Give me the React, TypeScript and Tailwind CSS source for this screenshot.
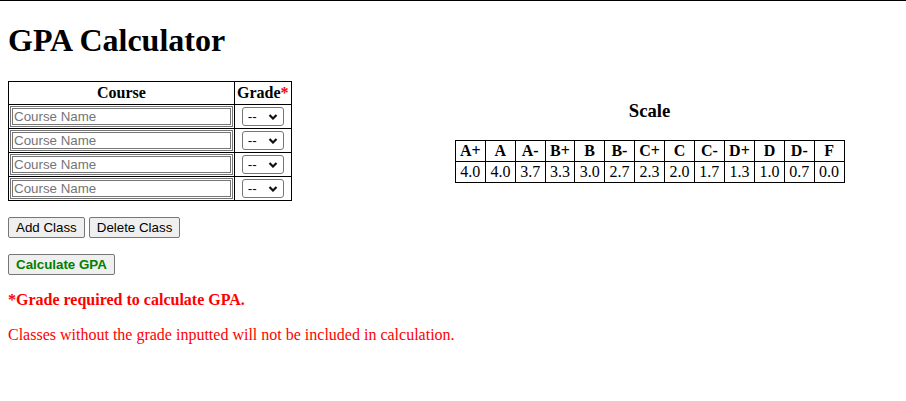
import React from "react";

const scale: [string, string][] = [
  ["A+", "4.0"],
  ["A", "4.0"],
  ["A-", "3.7"],
  ["B+", "3.3"],
  ["B", "3.0"],
  ["B-", "2.7"],
  ["C+", "2.3"],
  ["C", "2.0"],
  ["C-", "1.7"],
  ["D+", "1.3"],
  ["D", "1.0"],
  ["D-", "0.7"],
  ["F", "0.0"],
];

const GradeSelect: React.FC = () => (
  <div className="relative inline-block align-middle">
    <select className="appearance-none w-[42px] h-[19px] pl-[5px] border border-[#767676] rounded-[3px] bg-white text-black text-[13.33px] leading-[15px] [font-family:'Liberation_Sans',Arial,sans-serif]">
      <option>--</option>
      {scale.map(([g]) => (
        <option key={g}>{g}</option>
      ))}
    </select>
    <svg
      className="absolute right-[6px] top-[7px] pointer-events-none"
      width="10"
      height="6"
      viewBox="0 0 10 6"
    >
      <path d="M1.5 1 L5 4.5 L8.5 1" fill="none" stroke="#111" strokeWidth="2.2" />
    </svg>
  </div>
);

const CourseRow: React.FC = () => (
  <tr>
    <td className="border border-black p-[1px]">
      <input
        type="text"
        placeholder="Course Name"
        className="block w-[223px] h-[21px] px-[1px] py-0 border-[3px] border-double border-[#767676] bg-white text-[13.33px] placeholder:text-[#757575] [font-family:'Liberation_Sans',Arial,sans-serif]"
      />
    </td>
    <td className="border border-black p-[1px] text-center">
      <GradeSelect />
    </td>
  </tr>
);

const btn =
  "h-[21px] px-[7px] border border-[#767676] rounded-[2px] bg-[#efefef] text-[13.33px] leading-[15px] [font-family:'Liberation_Sans',Arial,sans-serif]";

export default function App() {
  return (
    <div className="min-h-[401px] bg-white border-t border-black text-black text-[16px] leading-[normal] [font-family:'Liberation_Serif','Times_New_Roman',serif]">
      <div className="px-2">
        <h1 className="text-[32px] font-bold leading-[normal] mt-[21.44px] mb-[21.44px]">GPA Calculator</h1>

        <div className="flex items-start">
          <table className="border-collapse border border-black">
            <thead>
              <tr>
                <th className="border border-black px-[1px] py-[2px]">Course</th>
                <th className="border border-black px-[2px] py-[2px]">
                  Grade<span className="text-[#ff0000]">*</span>
                </th>
              </tr>
            </thead>
            <tbody>
              <CourseRow />
              <CourseRow />
              <CourseRow />
              <CourseRow />
            </tbody>
          </table>

          <div className="ml-[163px] text-center">
            <h3 className="text-[18.72px] font-bold leading-[normal] my-[18.72px]">Scale</h3>
            <table className="w-[390px] border-collapse border border-black">
              <tbody>
                <tr>
                  {scale.map(([g]) => (
                    <th key={g} className="border border-black px-[4px] py-[1px]">
                      {g}
                    </th>
                  ))}
                </tr>
                <tr>
                  {scale.map(([g, v]) => (
                    <td key={g} className="border border-black px-[4px] py-[1px]">
                      {v}
                    </td>
                  ))}
                </tr>
              </tbody>
            </table>
          </div>
        </div>

        <div className="flex gap-1 mt-4">
          <button className={btn}>Add Class</button>
          <button className={btn}>Delete Class</button>
        </div>

        <div className="mt-4">
          <button className={`${btn} font-bold text-[#008000]`}>Calculate GPA</button>
        </div>

        <p className="mt-4 font-bold text-[#ff0000]">*Grade required to calculate GPA.</p>
        <p className="mt-[17px] text-[#ff0000]">Classes without the grade inputted will not be included in calculation.</p>
      </div>
    </div>
  );
}
